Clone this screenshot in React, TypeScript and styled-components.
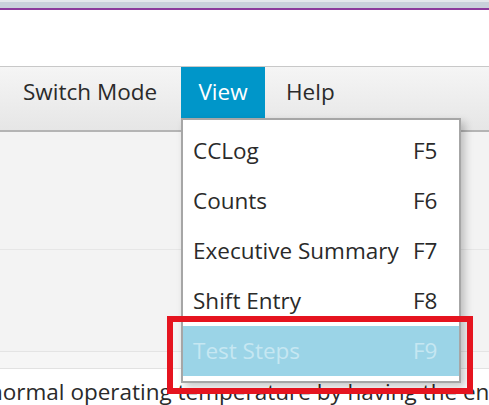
import React from "react";
import styled, { createGlobalStyle } from "styled-components";

const Global = createGlobalStyle`
  html, body { margin: 0; padding: 0; overflow: hidden; }
  body { width: 489px; height: 405px; font-family: "Open Sans", "Noto Sans", sans-serif; background: #fff; }
  #root { width: 489px; height: 405px; }
`;

const Page = styled.div`
  position: relative;
  width: 489px;
  height: 405px;
  overflow: hidden;
  display: flex;
  flex-direction: column;
`;

const TitleStrip = styled.div`
  height: 6px;
  flex: none;
  background: #c9d0db;
  border-top: 2px solid #e4e7ec;
  border-bottom: 2px solid #8c3a9c;
`;

const Header = styled.div`
  height: 56px;
  flex: none;
  background: #ffffff;
`;

const MenuBar = styled.div`
  height: 63px;
  flex: none;
  display: flex;
  align-items: flex-start;
  border-top: 1px solid #c8c8c8;
  border-bottom: 2px solid #b4b4b4;
  background: linear-gradient(#f5f5f5, #e6e6e6);
`;

const MenuTitle = styled.div<{ $active?: boolean; $width?: number; $pad?: number }>`
  height: 51px;
  box-sizing: border-box;
  display: flex;
  align-items: center;
  justify-content: ${(p) => (p.$width && !p.$pad ? "center" : "flex-start")};
  width: ${(p) => (p.$width ? `${p.$width}px` : "auto")};
  padding-left: ${(p) => (p.$pad ? `${p.$pad}px` : "0")};
  font-size: 22.5px;
  color: ${(p) => (p.$active ? "#ffffff" : "#2a2a2a")};
  background: ${(p) => (p.$active ? "#0096c9" : "transparent")};
  padding-bottom: 2px;
`;

const Section = styled.div<{ $h: number; $bg: string; $line?: string }>`
  height: ${(p) => p.$h}px;
  flex: none;
  background: ${(p) => p.$bg};
  border-bottom: ${(p) => (p.$line ? `1px solid ${p.$line}` : "none")};
`;

const Doc = styled.div`
  flex: 1;
  background: #ffffff;
  position: relative;
  display: flex;
  align-items: flex-end;
  overflow: hidden;
`;

const DocText = styled.div`
  font-size: 22.5px;
  color: #2a2a2a;
  white-space: nowrap;
  margin-left: -11px;
  line-height: 28px;
  margin-bottom: -1px;
`;

const Popup = styled.div`
  position: absolute;
  left: 181px;
  top: 118px;
  width: 280px;
  box-sizing: border-box;
  border: 2px solid #a6a6a6;
  background: #ffffff;
  padding: 6px 0 5px;
  box-shadow: 4px 4px 8px rgba(0, 0, 0, 0.22);
`;

const Item = styled.div<{ $hl?: boolean }>`
  height: 50px;
  display: grid;
  grid-template-columns: 1fr 46px;
  align-items: center;
  padding-left: 10px;
  font-size: 22.5px;
  color: ${(p) => (p.$hl ? "#c6e7f2" : "#2a2a2a")};
  background: ${(p) => (p.$hl ? "#9bd4e7" : "transparent")};
  padding-bottom: 2px;
  box-sizing: border-box;
`;

const RedBox = styled.div`
  position: absolute;
  left: 167px;
  top: 316px;
  width: 306px;
  height: 78px;
  box-sizing: border-box;
  border: 6px solid #e5141f;
`;

const items: [string, string][] = [
  ["CCLog", "F5"],
  ["Counts", "F6"],
  ["Executive Summary", "F7"],
  ["Shift Entry", "F8"],
  ["Test Steps", "F9"],
];

export default function App() {
  return (
    <Page>
      <Global />
      <TitleStrip />
      <Header />
      <MenuBar>
        <MenuTitle $width={181} $pad={23}>Switch Mode</MenuTitle>
        <MenuTitle $width={84} $active>View</MenuTitle>
        <MenuTitle $pad={21}>Help</MenuTitle>
      </MenuBar>
      <Section $h={117} $bg="#f3f3f3" $line="#e6e6e6" />
      <Section $h={101} $bg="#f3f3f3" $line="#e4e4e4" />
      <Section $h={16} $bg="#f6f6f6" $line="#e2e2e2" />
      <Doc>
        <DocText>normal operating temperature by having the en</DocText>
      </Doc>
      <Popup>
        {items.map(([l, k]) => (
          <Item key={l} $hl={l === "Test Steps"}>
            <span>{l}</span>
            <span>{k}</span>
          </Item>
        ))}
      </Popup>
      <RedBox />
    </Page>
  );
}
